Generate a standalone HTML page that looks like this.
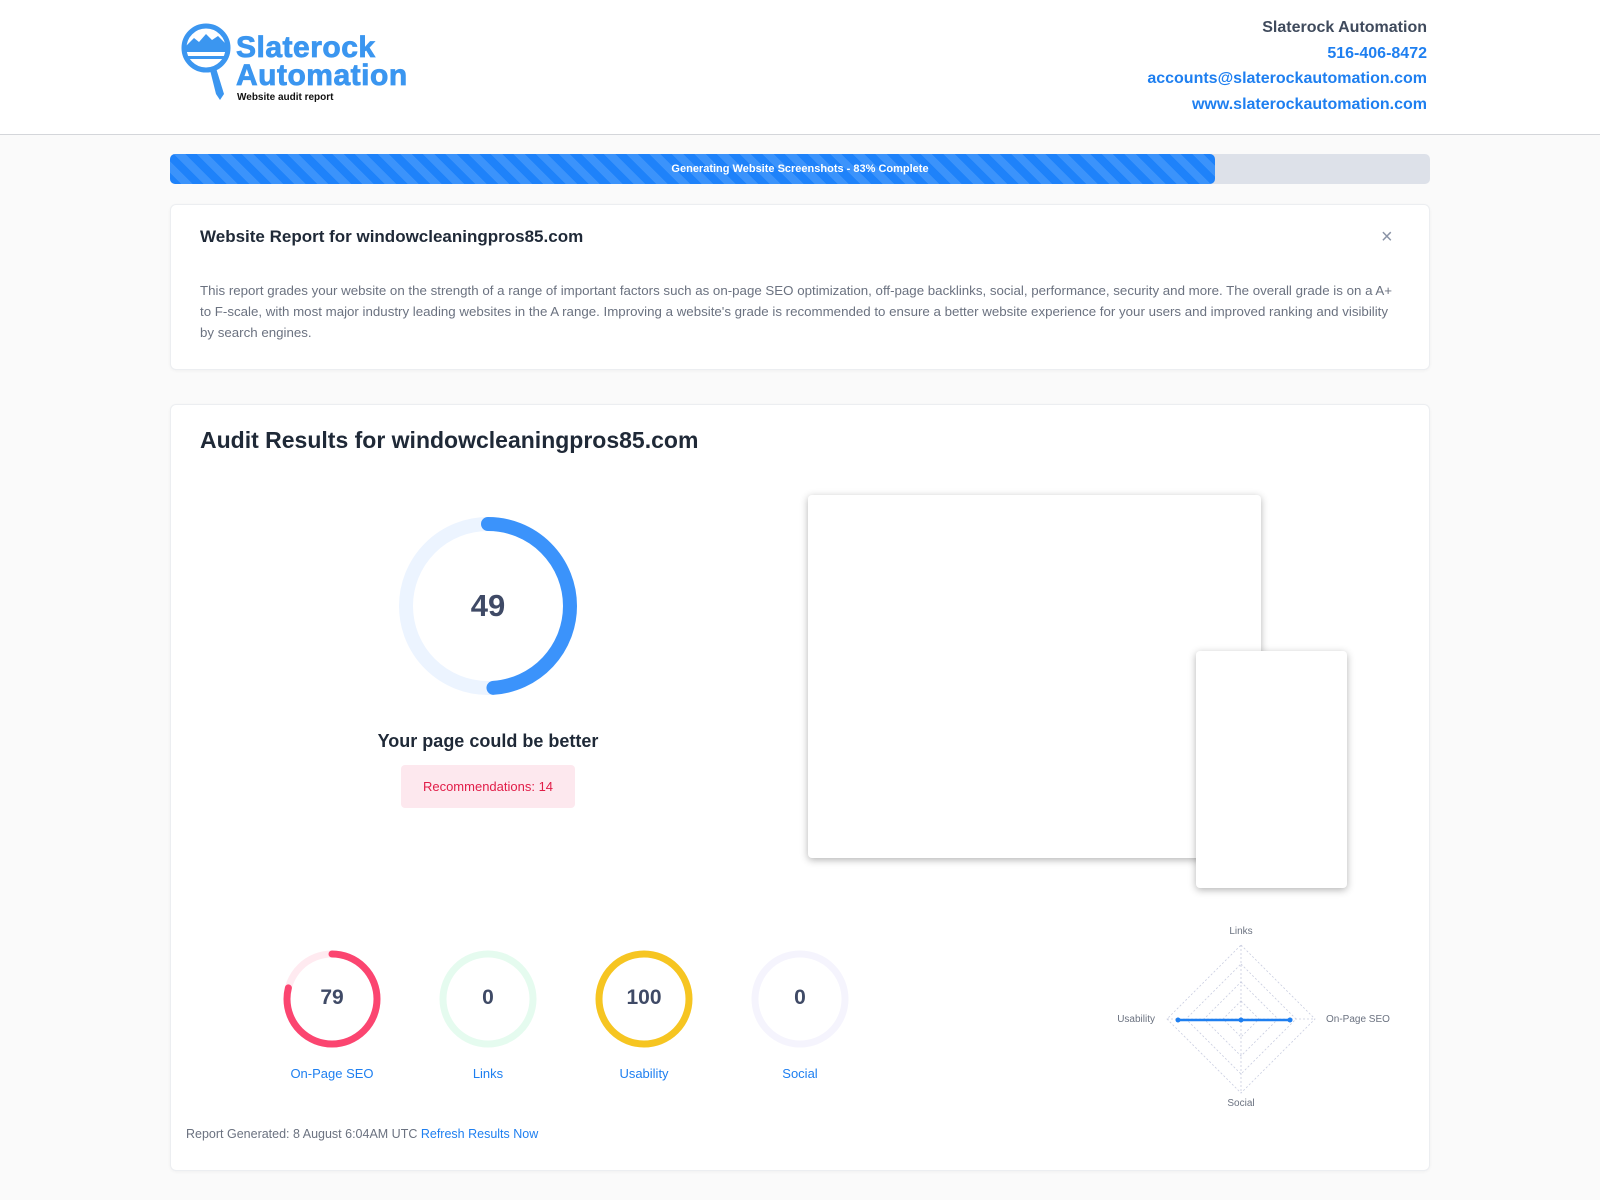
<!DOCTYPE html>
<html><head><meta charset="utf-8"><style>
*{box-sizing:border-box;margin:0;padding:0}
body{width:1600px;height:1200px;background:#fafafa;font-family:"Liberation Sans",sans-serif;position:relative;overflow:hidden;color:#1f2937}
.hdr{position:absolute;left:0;top:0;width:1600px;height:135px;background:#fff;border-bottom:1px solid #d4d6da}
.abs{position:absolute}
.card{position:absolute;background:#fff;border:1px solid #eceef1;border-radius:6px;box-shadow:0 1px 3px rgba(0,0,0,0.04)}
.rt{position:absolute;right:173px;text-align:right;font-size:16px;font-weight:bold;white-space:nowrap}
.lbl{position:absolute;width:140px;text-align:center;font-size:13px;color:#1e7ff0}
.num{position:absolute;width:100px;text-align:center;font-size:21px;font-weight:bold;color:#3f4a66}
</style></head><body>
<div class="hdr"></div>
<svg class="abs" style="left:180px;top:22px" width="56" height="80" viewBox="0 0 56 80">
<circle cx="26" cy="26" r="22" fill="none" stroke="#3b96f0" stroke-width="5"/>
<path d="M6 24 L14 16 L19 20 L26 12 L32 18 L38 14 L46 22 L46 30 L6 30Z" fill="#3b96f0"/>
<rect x="4" y="34" width="44" height="3" fill="#3b96f0"/>
<path d="M30 48 L36 46 L44 72 L40 78 L36 72Z" fill="#3b96f0"/>
</svg>
<div class="abs" style="left:236px;top:34px;font-size:30px;font-weight:900;color:#3b96f0;line-height:28px;-webkit-text-stroke:0.8px #3b96f0;letter-spacing:0.5px">Slaterock<br>Automation</div>
<div class="abs" style="left:237px;top:92px;font-size:10px;font-weight:bold;color:#111">Website audit report</div>
<div class="rt" style="top:19px;color:#3f4a5c">Slaterock Automation</div>
<div class="rt" style="top:45px;color:#1e7ff0">516-406-8472</div>
<div class="rt" style="top:70px;color:#1e7ff0">accounts@slaterockautomation.com</div>
<div class="rt" style="top:96px;color:#1e7ff0">www.slaterockautomation.com</div>

<div class="abs" style="left:170px;top:154px;width:1260px;height:30px;background:#dde1e9;border-radius:5px"></div>
<div class="abs" style="left:170px;top:154px;width:1045px;height:30px;border-radius:5px;background:repeating-linear-gradient(45deg,#1e82fa 0 8px,#3b93fb 8px 16px)"></div>
<div class="abs" style="left:170px;top:154px;width:1260px;height:30px;color:#fff;font-size:11px;font-weight:bold;text-align:center;line-height:30px">Generating Website Screenshots - 83% Complete</div>

<div class="card" style="left:170px;top:204px;width:1260px;height:166px"></div>
<div class="abs" style="left:200px;top:227px;font-size:17px;font-weight:bold;color:#1f2937">Website Report for windowcleaningpros85.com</div>
<div class="abs" style="left:1381px;top:226px;font-size:20px;color:#8a93a6">×</div>
<div class="abs" style="left:200px;top:280px;width:1195px;font-size:13.3px;line-height:21px;color:#6b7280">This report grades your website on the strength of a range of important factors such as on-page SEO optimization, off-page backlinks, social, performance, security and more. The overall grade is on a A+ to F-scale, with most major industry leading websites in the A range. Improving a website's grade is recommended to ensure a better website experience for your users and improved ranking and visibility by search engines.</div>

<div class="card" style="left:170px;top:404px;width:1260px;height:767px"></div>
<div class="abs" style="left:200px;top:427px;font-size:23px;font-weight:bold;color:#1f2937">Audit Results for windowcleaningpros85.com</div>

<svg class="abs" style="left:398px;top:516px" width="180" height="180" viewBox="0 0 180 180">
<circle cx="90" cy="90" r="82" fill="none" stroke="#ecf4ff" stroke-width="14"/>
<circle cx="90" cy="90" r="82" fill="none" stroke="#3b93fb" stroke-width="14" stroke-linecap="round" stroke-dasharray="252 600" transform="rotate(-90 90 90)"/>
</svg>
<div class="abs" style="left:438px;top:588px;width:100px;text-align:center;font-size:31px;font-weight:bold;color:#3f4a66">49</div>
<div class="abs" style="left:338px;top:731px;width:300px;text-align:center;font-size:18px;font-weight:bold;color:#1f2937">Your page could be better</div>
<div class="abs" style="left:401px;top:765px;width:174px;height:43px;background:#fde8ee;border-radius:4px;color:#e11d48;font-size:13px;text-align:center;line-height:43px">Recommendations: 14</div>

<div class="abs" style="left:808px;top:495px;width:453px;height:363px;background:#fff;border-radius:4px;box-shadow:0 2px 8px rgba(0,0,0,0.3)"></div>
<div class="abs" style="left:1196px;top:651px;width:151px;height:237px;background:#fff;border-radius:4px;box-shadow:0 2px 8px rgba(0,0,0,0.3)"></div>

<svg class="abs" style="left:280px;top:948px" width="600" height="104" viewBox="0 0 600 104">
<g fill="none" stroke-width="7">
<circle cx="52" cy="51" r="45" stroke="#ffeaf0"/>
<circle cx="52" cy="51" r="45" stroke="#fb4570" stroke-linecap="round" stroke-dasharray="223 400" transform="rotate(-90 52 51)"/>
<circle cx="208" cy="51" r="45" stroke="#e5fbef"/>
<circle cx="364" cy="51" r="45" stroke="#f6c521"/>
<circle cx="520" cy="51" r="45" stroke="#f5f4fd"/>
</g></svg>
<div class="num" style="left:282px;top:986px">79</div>
<div class="num" style="left:438px;top:986px">0</div>
<div class="num" style="left:594px;top:986px">100</div>
<div class="num" style="left:750px;top:986px">0</div>
<div class="lbl" style="left:262px;top:1066px">On-Page SEO</div>
<div class="lbl" style="left:418px;top:1066px">Links</div>
<div class="lbl" style="left:574px;top:1066px">Usability</div>
<div class="lbl" style="left:730px;top:1066px">Social</div>

<svg class="abs" style="left:1100px;top:920px" width="300" height="190" viewBox="0 0 300 190" font-family="Liberation Sans, sans-serif" font-size="10" fill="#6b7280">
<g fill="none" stroke="#c9cde0" stroke-width="0.8" stroke-dasharray="2 2">
<path d="M141 25 L215 99 L141 173 L67 99Z"/>
<path d="M141 44 L196 99 L141 154 L86 99Z"/>
<path d="M141 62 L178 99 L141 136 L104 99Z"/>
<path d="M141 81 L159 99 L141 117 L123 99Z"/>
<path d="M141 25 L141 173 M67 99 L215 99"/>
</g>
<path d="M78 100 L190 100" stroke="#1e7ff0" stroke-width="2.5"/>
<circle cx="78" cy="100" r="2.5" fill="#1e7ff0"/><circle cx="141" cy="100" r="2.5" fill="#1e7ff0"/><circle cx="190" cy="100" r="2.5" fill="#1e7ff0"/>
<text x="141" y="14" text-anchor="middle">Links</text>
<text x="55" y="102" text-anchor="end">Usability</text>
<text x="226" y="102">On-Page SEO</text>
<text x="141" y="186" text-anchor="middle">Social</text>
</svg>

<div class="abs" style="left:186px;top:1127px;font-size:12.5px;color:#6b7280">Report Generated: 8 August 6:04AM UTC <span style="color:#1e7ff0">Refresh Results Now</span></div>
</body></html>
